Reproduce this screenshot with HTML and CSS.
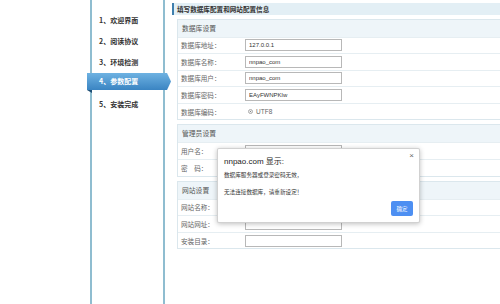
FILE: index.html
```html
<!DOCTYPE html>
<html lang="zh-CN">
<head>
  <meta charset="UTF-8" />
  <title>安装向导 - 参数配置</title>
  <link rel="stylesheet" href="styles.css">
</head>
<body>
  <div class="page">
    <!-- 安装步骤 -->
    <ul class="steps">
      <li>1、欢迎界面</li>
      <li>2、阅读协议</li>
      <li>3、环境检测</li>
      <li class="active">4、参数配置</li>
      <li>5、安装完成</li>
    </ul>

    <!-- 参数配置 -->
    <div class="main">
      <div class="title">填写数据库配置和网站配置信息</div>

      <div class="box">
        <div class="box-head">数据库设置</div>
        <div class="row"><span class="label">数据库地址：</span><input class="field" value="127.0.0.1"></div>
        <div class="row"><span class="label">数据库名称：</span><input class="field" value="nnpao_com"></div>
        <div class="row"><span class="label">数据库用户：</span><input class="field" value="nnpao_com"></div>
        <div class="row"><span class="label">数据库密码：</span><input class="field" value="EAyFWNPKlw"></div>
        <div class="row"><span class="label">数据库编码：</span><span class="radio"></span><span class="radio-text">UTF8</span></div>
      </div>

      <div class="box">
        <div class="box-head">管理员设置</div>
        <div class="row"><span class="label">用户名：</span><input class="field" value="admin"></div>
        <div class="row"><span class="label">密　码：</span><input class="field" type="password"></div>
      </div>

      <div class="box">
        <div class="box-head">网站设置</div>
        <div class="row"><span class="label">网站名称：</span><input class="field"></div>
        <div class="row"><span class="label">网站网址：</span><input class="field"></div>
        <div class="row"><span class="label">安装目录：</span><input class="field"></div>
      </div>
    </div>
  </div>

  <!-- 浏览器提示框 -->
  <div class="dialog">
    <span class="dialog-close">×</span>
    <div class="dialog-title">nnpao.com 显示:</div>
    <p class="dialog-text">数据库服务器或登录密码无效，</p>
    <p class="dialog-text">无法连接数据库，请重新设定！</p>
    <button class="dialog-btn">确定</button>
  </div>
</body>
</html>
```

FILE: styles.css
```css
* { margin: 0; padding: 0; box-sizing: border-box; }
body {
  font-family: "Noto Sans CJK SC", sans-serif;
  background-color: #fff;
  color: #333;
  overflow: hidden;
}
.page {
  display: flex;
  height: 100vh;
}
/* 安装步骤 */
.steps {
  list-style: none;
  flex-shrink: 0;
  width: 75px;
  margin-left: 90px;
  padding-top: 10px;
  border-left: 2px solid #8fbdd0;
  border-right: 2px solid #8fbdd0;
}
.steps li {
  height: 21px;
  line-height: 21px;
  padding-left: 7px;
  font-size: 7px;
  font-weight: bold;
  color: #333;
  white-space: nowrap;
}
.steps li.active {
  position: relative;
  z-index: 1;
  height: 17px;
  line-height: 17px;
  margin: 0 -8px 4px -5px;
  padding-left: 12px;
  color: #fff;
}
.steps li.active::before {
  content: "";
  position: absolute;
  top: 0; left: 0; right: 0; bottom: 0;
  z-index: -1;
  background: linear-gradient(#6eb2e2, #3a84c2);
  clip-path: polygon(0 0, calc(100% - 4px) 0, 100% 50%, calc(100% - 4px) 100%, 0 100%);
}
.steps li.active::after {
  content: "";
  position: absolute;
  left: 0;
  bottom: -3px;
  border-top: 3px solid #1e4f75;
  border-left: 5px solid transparent;
}
/* 参数配置 */
.main {
  flex: 1;
  min-width: 0;
  margin-left: 7px;
  padding-top: 3px;
}
.title {
  height: 12px;
  line-height: 12px;
  margin-bottom: 3.5px;
  padding-left: 3px;
  background-color: #e3eff5;
  border-left: 2px solid #3f7fae;
  font-size: 6.6px;
  font-weight: bold;
  color: #333;
}
.box {
  margin: 0 0 4px 5px;
  border: 1px solid #dbe7ed;
  border-right: none;
}
.box-head {
  height: 17px;
  line-height: 17px;
  padding-left: 4px;
  background-color: #eef5f9;
  font-size: 6.8px;
  color: #555;
}
.row {
  display: flex;
  align-items: center;
  height: 16.6px;
  border-top: 1px solid #e6eef2;
}
.label {
  width: 67px;
  padding-left: 3px;
  font-size: 6.6px;
  color: #666;
}
.field {
  width: 97px;
  height: 12px;
  padding: 0 3px;
  border: 1px solid #b8b8b8;
  font: 6px "Liberation Sans", Arial, sans-serif;
  color: #333;
  outline: none;
}
.radio {
  width: 5px;
  height: 5px;
  margin-left: 3px;
  border-radius: 50%;
  border: 1px solid #aaa;
  background: radial-gradient(#888 40%, #eee 45%);
}
.radio-text {
  margin-left: 3px;
  font: 6.5px "Liberation Sans", Arial, sans-serif;
  color: #666;
}
/* 浏览器提示框 */
.dialog {
  position: absolute;
  left: 217px;
  top: 148px;
  width: 203px;
  height: 75px;
  padding: 6px 6px 0;
  background-color: #fff;
  border: 1px solid rgba(0,0,0,0.18);
  border-radius: 2px;
  box-shadow: 0 1px 5px rgba(0,0,0,0.25);
}
.dialog-close {
  position: absolute;
  right: 5px;
  top: 2px;
  font: 8px "Liberation Sans", Arial, sans-serif;
  color: #666;
}
.dialog-title {
  font: 8px "Liberation Sans", "Noto Sans CJK SC", sans-serif;
  color: #222;
  margin-bottom: 5px;
}
.dialog-text {
  font-size: 5.6px;
  line-height: 8px;
  color: #333;
  margin-bottom: 9px;
}
.dialog-btn {
  position: absolute;
  right: 6px;
  bottom: 6px;
  width: 22px;
  height: 15px;
  background-color: #4d8ff2;
  color: #fff;
  border: none;
  border-radius: 2px;
  font-size: 5.4px;
  font-family: "Noto Sans CJK SC", sans-serif;
}
```
